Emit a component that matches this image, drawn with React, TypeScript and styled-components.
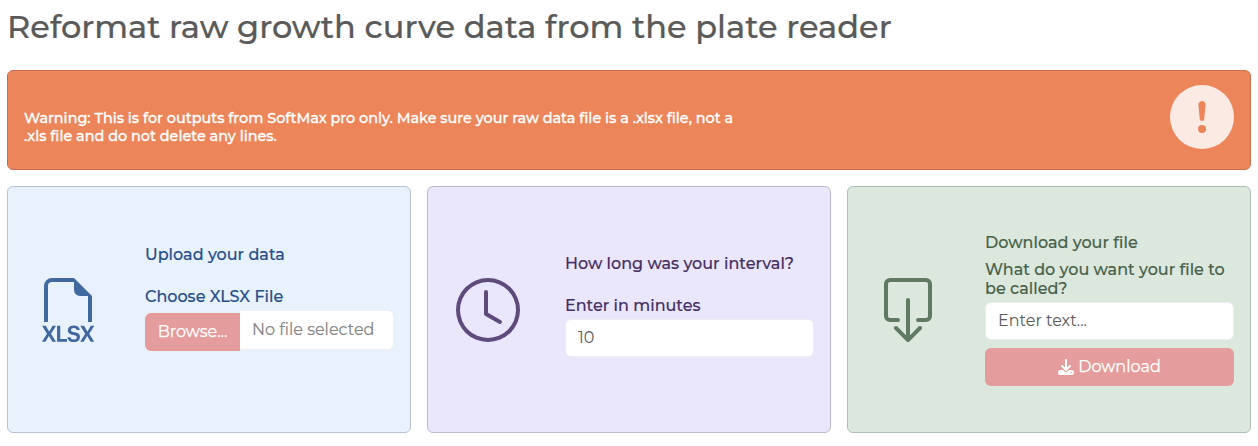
import React from "react";
import styled, { createGlobalStyle } from "styled-components";
import {
  BsBoxArrowDown,
  BsClock,
  BsExclamationCircleFill,
  BsFiletypeXlsx,
} from "react-icons/bs";
import { FaDownload } from "react-icons/fa6";

const GlobalStyle = createGlobalStyle`
  *, *::before, *::after { box-sizing: border-box; }
  body {
    margin: 0;
    background: #fff;
    color: #5a5a5a;
    font-family: Montserrat, Inter, "Open Sans", sans-serif;
    font-size: 16px;
    line-height: 24px;
    overflow: hidden;
  }
  input, button { font: inherit; }
`;

const Page = styled.main`
  display: flex;
  flex-direction: column;
  height: 446px;
  padding: 7px 7px 0;
`;

const Title = styled.h1`
  margin: 0 0 24px;
  height: 39px;
  font-size: 32px;
  font-weight: 500;
  line-height: 39px;
  letter-spacing: 0.02px;
  white-space: nowrap;
  -webkit-text-stroke: 0.2px;
`;

const Warning = styled.section`
  display: flex;
  justify-content: space-between;
  height: 100px;
  margin-bottom: 16px;
  padding: 14px 16px;
  border: 1px solid #c76f50;
  border-radius: 6px;
  background: #ed855b;
  color: #fff;
`;

const WarningText = styled.p`
  margin: 24px 0 0;
  font-size: 14.4px;
  font-weight: 500;
  line-height: 18px;
  white-space: nowrap;
  -webkit-text-stroke: 0.3px;
`;

const WarningIcon = styled(BsExclamationCircleFill)`
  width: 64px;
  height: 64px;
  color: #fbeae4;
`;

const Cards = styled.div`
  display: grid;
  grid-template-columns: repeat(3, minmax(0, 1fr));
  gap: 16px;
  height: 247px;
`;

const Card = styled.section<{ $bg: string; $edge: string; $ink: string }>`
  display: grid;
  grid-template-columns: 120px minmax(0, 1fr);
  align-items: center;
  padding-right: 16px;
  border: 1px solid ${(p) => p.$edge};
  border-radius: 6px;
  background: ${(p) => p.$bg};
  color: ${(p) => p.$ink};
`;

const Showcase = styled.div<{ $tone: string }>`
  display: flex;
  justify-content: center;
  color: ${(p) => p.$tone};
  svg { width: 64px; height: 64px; }
`;

const Content = styled.div<{ $below?: number }>`
  display: flex;
  flex-direction: column;
  padding: 0 0 ${(p) => p.$below ?? 0}px 17px;
`;

const Heading = styled.p<{ $gap: number }>`
  margin: 0 0 ${(p) => p.$gap}px;
  font-weight: 500;
  line-height: 19px;
  white-space: nowrap;
  -webkit-text-stroke: 0.15px;
`;

const Label = styled.label<{ $gap: number }>`
  margin-bottom: ${(p) => p.$gap}px;
  font-weight: 500;
  line-height: 19px;
  white-space: nowrap;
  -webkit-text-stroke: 0.15px;
`;

const Field = styled.input`
  width: 100%;
  height: 38px;
  padding: 0 12px 2px;
  border: 1px solid #eeeef2;
  border-radius: 6px;
  background: #fff;
  color: #5a5a5a;
  outline: 0;
  &::placeholder { color: #5a5a5a; opacity: 1; }
`;

const FileInput = styled.div`
  display: flex;
  align-items: flex-start;
  height: 41px;
`;

const Browse = styled.button`
  width: 95px;
  height: 38px;
  margin-top: 3px;
  padding: 0;
  border: 0;
  border-radius: 6px 0 0 6px;
  background: #e59c9c;
  color: #fff;
  -webkit-text-stroke: 0.25px;
`;

const FileName = styled.span`
  flex: 1;
  height: 40px;
  padding-left: 12px;
  border: 1px solid #eef2f5;
  border-left: 0;
  border-radius: 0 6px 6px 0;
  background: #fff;
  color: #858585;
  line-height: 38px;
  white-space: nowrap;
  -webkit-text-stroke: 0.15px;
`;

const Download = styled.button`
  display: flex;
  align-items: center;
  justify-content: center;
  gap: 4px;
  height: 38px;
  margin-top: 8px;
  border: 0;
  border-radius: 6px;
  background: #e59c9c;
  color: #fff;
  -webkit-text-stroke: 0.25px;
  svg { width: 16px; height: 16px; }
`;

export default function App() {
  return (
    <>
      <GlobalStyle />
      <Page>
        <Title>Reformat raw growth curve data from the plate reader</Title>
        <Warning>
          <WarningText>
            Warning: This is for outputs from SoftMax pro only. Make sure your raw data file is a .xlsx file, not a
            <br />
            .xls file and do not delete any lines.
          </WarningText>
          <WarningIcon />
        </Warning>
        <Cards>
          <Card $bg="#e8f1fc" $edge="#b9c1d2" $ink="#264f8c">
            <Showcase $tone="#4169a0"><BsFiletypeXlsx /></Showcase>
            <Content $below={24}>
              <Heading $gap={23}>Upload your data</Heading>
              <Label $gap={4}>Choose XLSX File</Label>
              <FileInput>
                <Browse type="button">Browse...</Browse>
                <FileName>No file selected</FileName>
              </FileInput>
            </Content>
          </Card>
          <Card $bg="#eae7fc" $edge="#bbb9d0" $ink="#462e66">
            <Showcase $tone="#5e4a7b"><BsClock /></Showcase>
            <Content $below={8}>
              <Heading $gap={23}>How long was your interval?</Heading>
              <Label htmlFor="interval" $gap={4}>Enter in minutes</Label>
              <Field id="interval" defaultValue="10" />
            </Content>
          </Card>
          <Card $bg="#dce7de" $edge="#afbeb3" $ink="#476248">
            <Showcase $tone="#607963"><BsBoxArrowDown /></Showcase>
            <Content>
              <Heading $gap={8}>Download your file</Heading>
              <Label htmlFor="filename" $gap={4}>
                What do you want your file to
                <br />
                be called?
              </Label>
              <Field id="filename" placeholder="Enter text..." />
              <Download type="button"><FaDownload />Download</Download>
            </Content>
          </Card>
        </Cards>
      </Page>
    </>
  );
}
